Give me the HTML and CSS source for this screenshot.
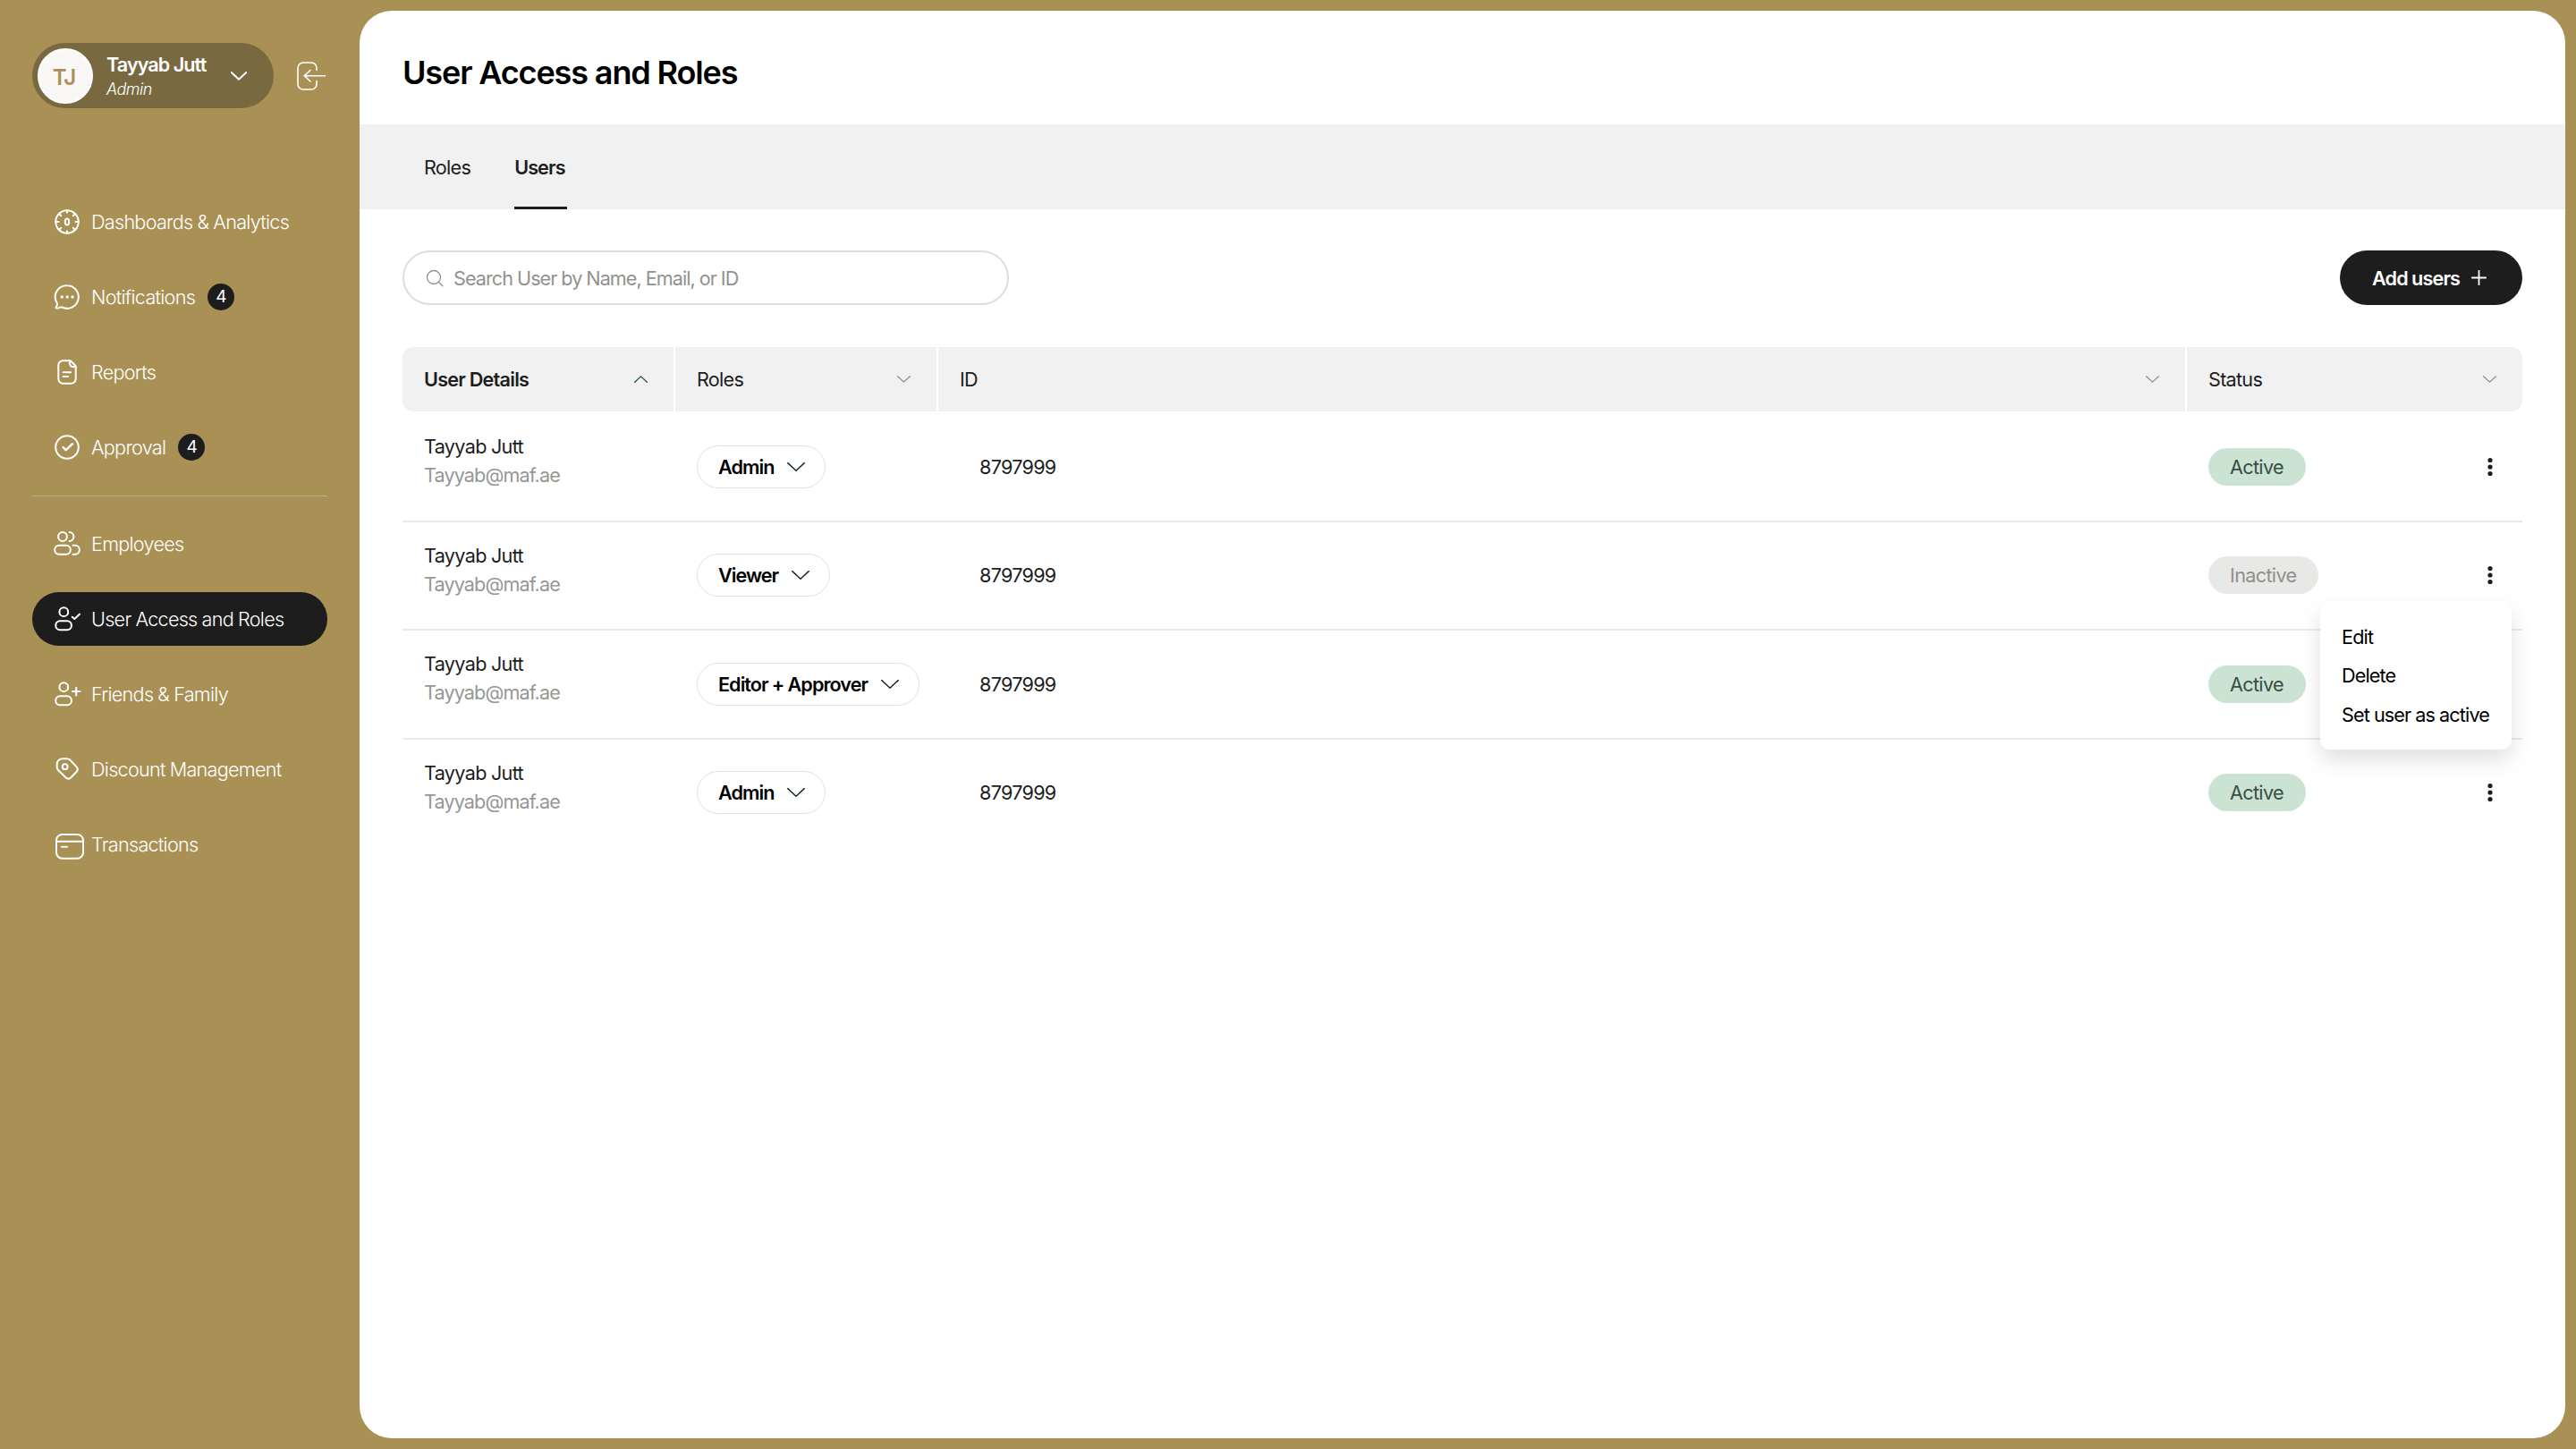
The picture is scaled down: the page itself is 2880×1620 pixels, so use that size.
FILE: index.html
```html
<!DOCTYPE html>
<html lang="en">
<head>
    <meta charset="UTF-8">
    <meta name="viewport" content="width=device-width, initial-scale=1.0">
    <title>User Access and Roles</title>
    <link rel="stylesheet" href="styles.css">
</head>
<body>

    <svg class="sprite" width="0" height="0">
        <symbol id="chevron" viewBox="0 0 20 10">
            <path d="M.8.6 10 9.2 19.2.6"/>
        </symbol>
        <symbol id="dots" viewBox="0 0 6 22">
            <circle cx="3" cy="3.5" r="2.6"/><circle cx="3" cy="11" r="2.6"/><circle cx="3" cy="18.5" r="2.6"/>
        </symbol>
    </svg>

    <aside class="sidebar">
        <div class="account">
            <div class="profile">
                <div class="avatar">TJ</div>
                <div class="profile-text">
                    <div class="profile-name">Tayyab Jutt</div>
                    <div class="profile-role">Admin</div>
                </div>
                <svg class="profile-chevron"><use href="#chevron"/></svg>
            </div>
            <svg class="logout" viewBox="0 0 32 32">
                <path d="M22 9.5V7a6 6 0 0 0-6-6H7a6 6 0 0 0-6 6v18a6 6 0 0 0 6 6h9a6 6 0 0 0 6-6v-3.5"/>
                <path d="M31.5 15.7H8.5M15 9.5l-6.7 6.2L15 22"/>
            </svg>
        </div>

        <nav class="nav">
            <a class="nav-item">
                <svg class="icon" viewBox="0 0 30 30">
                    <circle cx="15" cy="15" r="12.8"/>
                    <ellipse cx="15" cy="15" rx="2.2" ry="3.6"/>
                    <path d="M15 2.5v2.3M15 25.2v2.3M2.5 15h3M24.5 15h3M7 7l1.2 1.2M23 7l-1.2 1.2M7 23l1.2-1.2M23 23l-1.2-1.2"/>
                </svg>
                <span>Dashboards &amp; Analytics</span>
            </a>
            <a class="nav-item">
                <svg class="icon" viewBox="0 0 30 30">
                    <path d="M15 2.2a12.8 12.8 0 1 1-5.6 24.3c-.8-.3-1.4-.2-2 .1-.9.5-2.2 1.3-3.8 1-1.3-.2-1.2-1.3-.4-2 .9-1 1.1-2.4.5-3.8A12.8 12.8 0 0 1 15 2.2z"/>
                    <g class="solid"><circle cx="9.3" cy="15" r="1.7"/><circle cx="15.2" cy="15" r="1.7"/><circle cx="21" cy="15" r="1.7"/></g>
                </svg>
                <span>Notifications</span>
                <span class="count">4</span>
            </a>
            <a class="nav-item">
                <svg class="icon" viewBox="0 0 30 30">
                    <path d="M18 2.3h-7.5a5.2 5.2 0 0 0-5.2 5.2v15a5.2 5.2 0 0 0 5.2 5.2h9a5.2 5.2 0 0 0 5.2-5.2V9.3c0-.8-.3-1.5-.9-2.1l-4-4c-.5-.6-1.2-.9-1.8-.9z"/>
                    <path d="M18 2.5v2.8c0 2.5 1.6 3.8 4 3.8h2.5M10.6 15.2h8.6M10.6 20h5.6"/>
                </svg>
                <span>Reports</span>
            </a>
            <a class="nav-item">
                <svg class="icon" viewBox="0 0 30 30">
                    <circle cx="15" cy="15" r="12.8"/>
                    <path class="bold" d="m10.5 15 3.2 3.2 7.4-7"/>
                </svg>
                <span>Approval</span>
                <span class="count">4</span>
            </a>

            <hr class="nav-line">

            <a class="nav-item">
                <svg class="icon" viewBox="0 0 30 30">
                    <circle cx="10" cy="7" r="4.9"/>
                    <rect x="1.2" y="16.8" width="17.6" height="10" rx="4.8"/>
                    <path d="M17.5 2.1a4.9 4.9 0 0 1 0 9.8M21.5 16.8h2.4a4.9 4.9 0 0 1 0 10h-2.4"/>
                </svg>
                <span>Employees</span>
            </a>
            <a class="nav-item active">
                <svg class="icon" viewBox="0 0 30 30">
                    <circle cx="11.3" cy="7.2" r="4.9"/>
                    <rect x="2.3" y="17.2" width="17.6" height="10" rx="4.8"/>
                    <path d="m20.8 12.7 2.5 2.3 5.8-5.4"/>
                </svg>
                <span>User Access and Roles</span>
            </a>
            <a class="nav-item">
                <svg class="icon" viewBox="0 0 30 30">
                    <circle cx="11.3" cy="7.2" r="4.9"/>
                    <rect x="2.3" y="17.2" width="17.6" height="10" rx="4.8"/>
                    <path d="M25.2 7.8v8.6M20.9 12.1h8.6"/>
                </svg>
                <span>Friends &amp; Family</span>
            </a>
            <a class="nav-item">
                <svg class="icon" viewBox="0 0 30 30">
                    <path d="M10.5 3.3h4.2c1.4 0 2.7.6 3.7 1.5l7 7.3c1.7 1.8 1.7 4 0 5.9l-6 6.3c-1.8 1.8-4.1 1.8-5.9 0l-8.2-8c-1-1-1.6-2.4-1.6-3.9V9.5c0-3.8 2.8-6.2 6.8-6.2z"/>
                    <circle cx="12.7" cy="12.2" r="2.9"/>
                </svg>
                <span>Discount Management</span>
            </a>
            <a class="nav-item">
                <svg class="icon" viewBox="0 0 30 30">
                    <rect x="3" y="4" width="30" height="26.7" rx="6.5"/>
                    <path d="M3 11.7h30M9 17.7h6"/>
                </svg>
                <span>Transactions</span>
            </a>
        </nav>
    </aside>

    <main class="panel">
        <header class="panel-head">
            <h1>User Access and Roles</h1>
        </header>

        <div class="tabs">
            <a class="tab">Roles</a>
            <a class="tab selected">Users</a>
        </div>

        <div class="content">
            <div class="toolbar">
                <div class="search">
                    <svg viewBox="0 0 20 20"><circle cx="9" cy="9" r="7.5"/><path d="m14.3 14.3 4.5 4.5"/></svg>
                    <span>Search User by Name, Email, or ID</span>
                </div>
                <button class="add-btn">
                    <span>Add users</span>
                    <svg viewBox="0 0 18 18"><path d="M9 .8v16.4M.8 9h16.4"/></svg>
                </button>
            </div>

            <div class="table">
                <div class="row head">
                    <div class="cell sorted"><span>User Details</span><svg class="sort up"><use href="#chevron"/></svg></div>
                    <div class="cell"><span>Roles</span><svg class="sort"><use href="#chevron"/></svg></div>
                    <div class="cell"><span>ID</span><svg class="sort"><use href="#chevron"/></svg></div>
                    <div class="cell"><span>Status</span><svg class="sort"><use href="#chevron"/></svg></div>
                </div>

                <div class="row">
                    <div class="cell user"><div class="name">Tayyab Jutt</div><div class="email">Tayyab@maf.ae</div></div>
                    <div class="cell"><div class="role">Admin<svg><use href="#chevron"/></svg></div></div>
                    <div class="cell number">8797999</div>
                    <div class="cell state"><span class="status">Active</span><svg class="dots"><use href="#dots"/></svg></div>
                </div>
                <div class="row">
                    <div class="cell user"><div class="name">Tayyab Jutt</div><div class="email">Tayyab@maf.ae</div></div>
                    <div class="cell"><div class="role">Viewer<svg><use href="#chevron"/></svg></div></div>
                    <div class="cell number">8797999</div>
                    <div class="cell state">
                        <span class="status off">Inactive</span><svg class="dots"><use href="#dots"/></svg>
                        <div class="menu">
                            <a>Edit</a>
                            <a>Delete</a>
                            <a>Set user as active</a>
                        </div>
                    </div>
                </div>
                <div class="row">
                    <div class="cell user"><div class="name">Tayyab Jutt</div><div class="email">Tayyab@maf.ae</div></div>
                    <div class="cell"><div class="role">Editor + Approver<svg><use href="#chevron"/></svg></div></div>
                    <div class="cell number">8797999</div>
                    <div class="cell state"><span class="status">Active</span><svg class="dots"><use href="#dots"/></svg></div>
                </div>
                <div class="row">
                    <div class="cell user"><div class="name">Tayyab Jutt</div><div class="email">Tayyab@maf.ae</div></div>
                    <div class="cell"><div class="role">Admin<svg><use href="#chevron"/></svg></div></div>
                    <div class="cell number">8797999</div>
                    <div class="cell state"><span class="status">Active</span><svg class="dots"><use href="#dots"/></svg></div>
                </div>
            </div>
        </div>
    </main>

</body>
</html>
```
FILE: styles.css
```css
* {
    box-sizing: border-box;
}
body {
    margin: 0;
    height: 1620px;
    display: flex;
    background-color: #a99155;
    font-family: Inter, "Liberation Sans", sans-serif;
    font-size: 21.6px;
    letter-spacing: -0.72px;
    word-spacing: -0.3px;
    color: #1d1d1d;
}
svg {
    flex: none;
    fill: none;
    stroke: currentColor;
    stroke-linecap: round;
    stroke-linejoin: round;
}
.sprite {
    position: absolute;
}

/* sidebar */
.sidebar {
    width: 402px;
    padding: 48px 36px 0;
    color: #fff;
}
.account {
    display: flex;
    align-items: center;
    gap: 26px;
    height: 73px;
}
.profile {
    display: flex;
    align-items: center;
    width: 270px;
    height: 73px;
    padding-left: 6px;
    border-radius: 37px;
    background-color: #796940;
}
.avatar {
    width: 62px;
    height: 62px;
    border: 2px solid #fff;
    border-radius: 50%;
    background-color: #faf8f7;
    color: #a99155;
    font-size: 24px;
    font-weight: 600;
    letter-spacing: -1px;
    line-height: 61px;
    text-align: center;
    text-indent: -3px;
}
.profile-text {
    width: 144px;
    padding: 3px 0 0 15px;
}
.profile-name {
    font-weight: 600;
    letter-spacing: -0.9px;
    line-height: 28px;
}
.profile-role {
    font-size: 18px;
    font-style: italic;
    font-weight: 300;
    letter-spacing: -0.5px;
    line-height: 28px;
}
.profile-chevron {
    width: 18px;
    height: 10px;
    margin-left: 10px;
    stroke-width: 2.2;
}
.logout {
    width: 32px;
    height: 32px;
    stroke-width: 1.6;
}
.nav {
    display: flex;
    flex-direction: column;
    gap: 24px;
    margin-top: 97px;
}
.nav-item {
    display: flex;
    align-items: center;
    height: 60px;
    padding-left: 24px;
    border-radius: 30px;
    font-weight: 300;
}
.nav-item.active {
    background-color: #1d1d1d;
}
.icon {
    width: 30px;
    height: 30px;
    margin-right: 12px;
    overflow: visible;
    stroke-width: 2;
}
.icon .solid {
    fill: currentColor;
    stroke: none;
}
.icon .bold {
    stroke-width: 2.4;
}
.count {
    width: 30px;
    height: 30px;
    margin-left: 14px;
    border-radius: 50%;
    background-color: #1d1d1d;
    font-size: 19px;
    font-weight: 400;
    line-height: 30px;
    text-align: center;
}
.nav-line {
    width: 100%;
    height: 1px;
    margin: 0 0 -1px;
    border: none;
    background-color: #b5ada0;
}

/* main panel */
.panel {
    flex: 1;
    margin: 12px 12px 12px 0;
    border-radius: 36px;
    background-color: #fff;
}
.panel-head {
    height: 127px;
    padding: 0 48px;
}
h1 {
    margin: 0;
    color: #000;
    font-size: 36px;
    font-weight: 600;
    letter-spacing: -1.13px;
    word-spacing: 0;
    line-height: 139px;
}
.tabs {
    display: flex;
    gap: 49px;
    height: 95px;
    padding-left: 72px;
    background-color: #f1f1f1;
}
.tab {
    line-height: 96px;
}
.tab.selected {
    padding-right: 2px;
    border-bottom: 3px solid #1d1d1d;
    font-weight: 600;
    letter-spacing: -0.9px;
}
.content {
    padding: 46px 48px;
}
.toolbar {
    display: flex;
    justify-content: space-between;
    height: 61px;
}
.search {
    display: flex;
    align-items: center;
    gap: 11px;
    width: 678px;
    padding-left: 24px;
    border: 2px solid #d6e1da;
    border-radius: 31px;
    color: #91928e;
    letter-spacing: -0.92px;
}
.search svg {
    width: 20px;
    height: 20px;
    stroke-width: 1.3;
}
.add-btn {
    display: flex;
    align-items: center;
    gap: 13px;
    width: 204px;
    padding: 0 0 0 36px;
    border: none;
    border-radius: 31px;
    background-color: #1d1d1d;
    color: #fff;
    font: inherit;
    font-weight: 600;
    letter-spacing: -0.85px;
    word-spacing: inherit;
}
.add-btn svg {
    width: 17px;
    height: 17px;
    stroke-width: 1.9;
}

/* users table */
.table {
    margin-top: 47px;
}
.row {
    display: grid;
    grid-template-columns: 303px 294px 1396px 377px;
    height: 121.5px;
    border-bottom: 2px solid #e9e9e8;
}
.row:last-child {
    border-bottom-color: transparent;
}
.row.head {
    height: 72px;
    margin-bottom: 2px;
    border: none;
    border-radius: 12px;
    background-color: #f1f1f1;
}
.cell {
    display: flex;
    align-items: center;
    padding-left: 26px;
}
.head .cell {
    justify-content: space-between;
    padding: 0 29px 0 24px;
    border-left: 2px solid #fff;
}
.head .cell:first-child {
    border-left: none;
}
.cell.sorted {
    font-weight: 600;
}
.sort {
    width: 15px;
    height: 8px;
    color: #8d8f8b;
    stroke-width: 1.7;
}
.sort.up {
    transform: rotate(180deg);
    color: #24513d;
}
.cell.user {
    flex-direction: column;
    align-items: flex-start;
    padding: 21px 0 0 24px;
    line-height: 32px;
}
.name {
    letter-spacing: -0.65px;
}
.email {
    color: #969894;
    letter-spacing: -0.88px;
}
.role {
    display: flex;
    align-items: center;
    gap: 15px;
    height: 48px;
    padding: 0 22px 0 23px;
    border: 1px solid #e1e1e0;
    border-radius: 24px;
    color: #000;
    font-weight: 600;
    letter-spacing: -0.95px;
}
.role svg {
    width: 20px;
    height: 10px;
    color: #1d2d26;
    stroke-width: 1.5;
}
.cell.number {
    padding-left: 48px;
}
.cell.state {
    position: relative;
    justify-content: space-between;
    padding-right: 33px;
}
.status {
    height: 42px;
    padding: 0 25px 0 24px;
    border-radius: 21px;
    background-color: #cae3d3;
    color: #3a4d43;
    letter-spacing: -0.65px;
    line-height: 42px;
}
.status.off {
    background-color: #e8e8e7;
    color: #8f908c;
}
.dots {
    width: 6px;
    height: 22px;
    fill: #1d1d1d;
    stroke: none;
}
.menu {
    position: absolute;
    top: 88px;
    right: 12px;
    z-index: 1;
    width: 214px;
    height: 166px;
    padding: 19px 24px;
    border-radius: 11px;
    background-color: #fff;
    box-shadow: 0 12px 24px rgba(0, 0, 0, 0.12);
    color: #000;
    letter-spacing: -0.85px;
}
.menu a {
    display: block;
    line-height: 43.5px;
    white-space: nowrap;
}
```
